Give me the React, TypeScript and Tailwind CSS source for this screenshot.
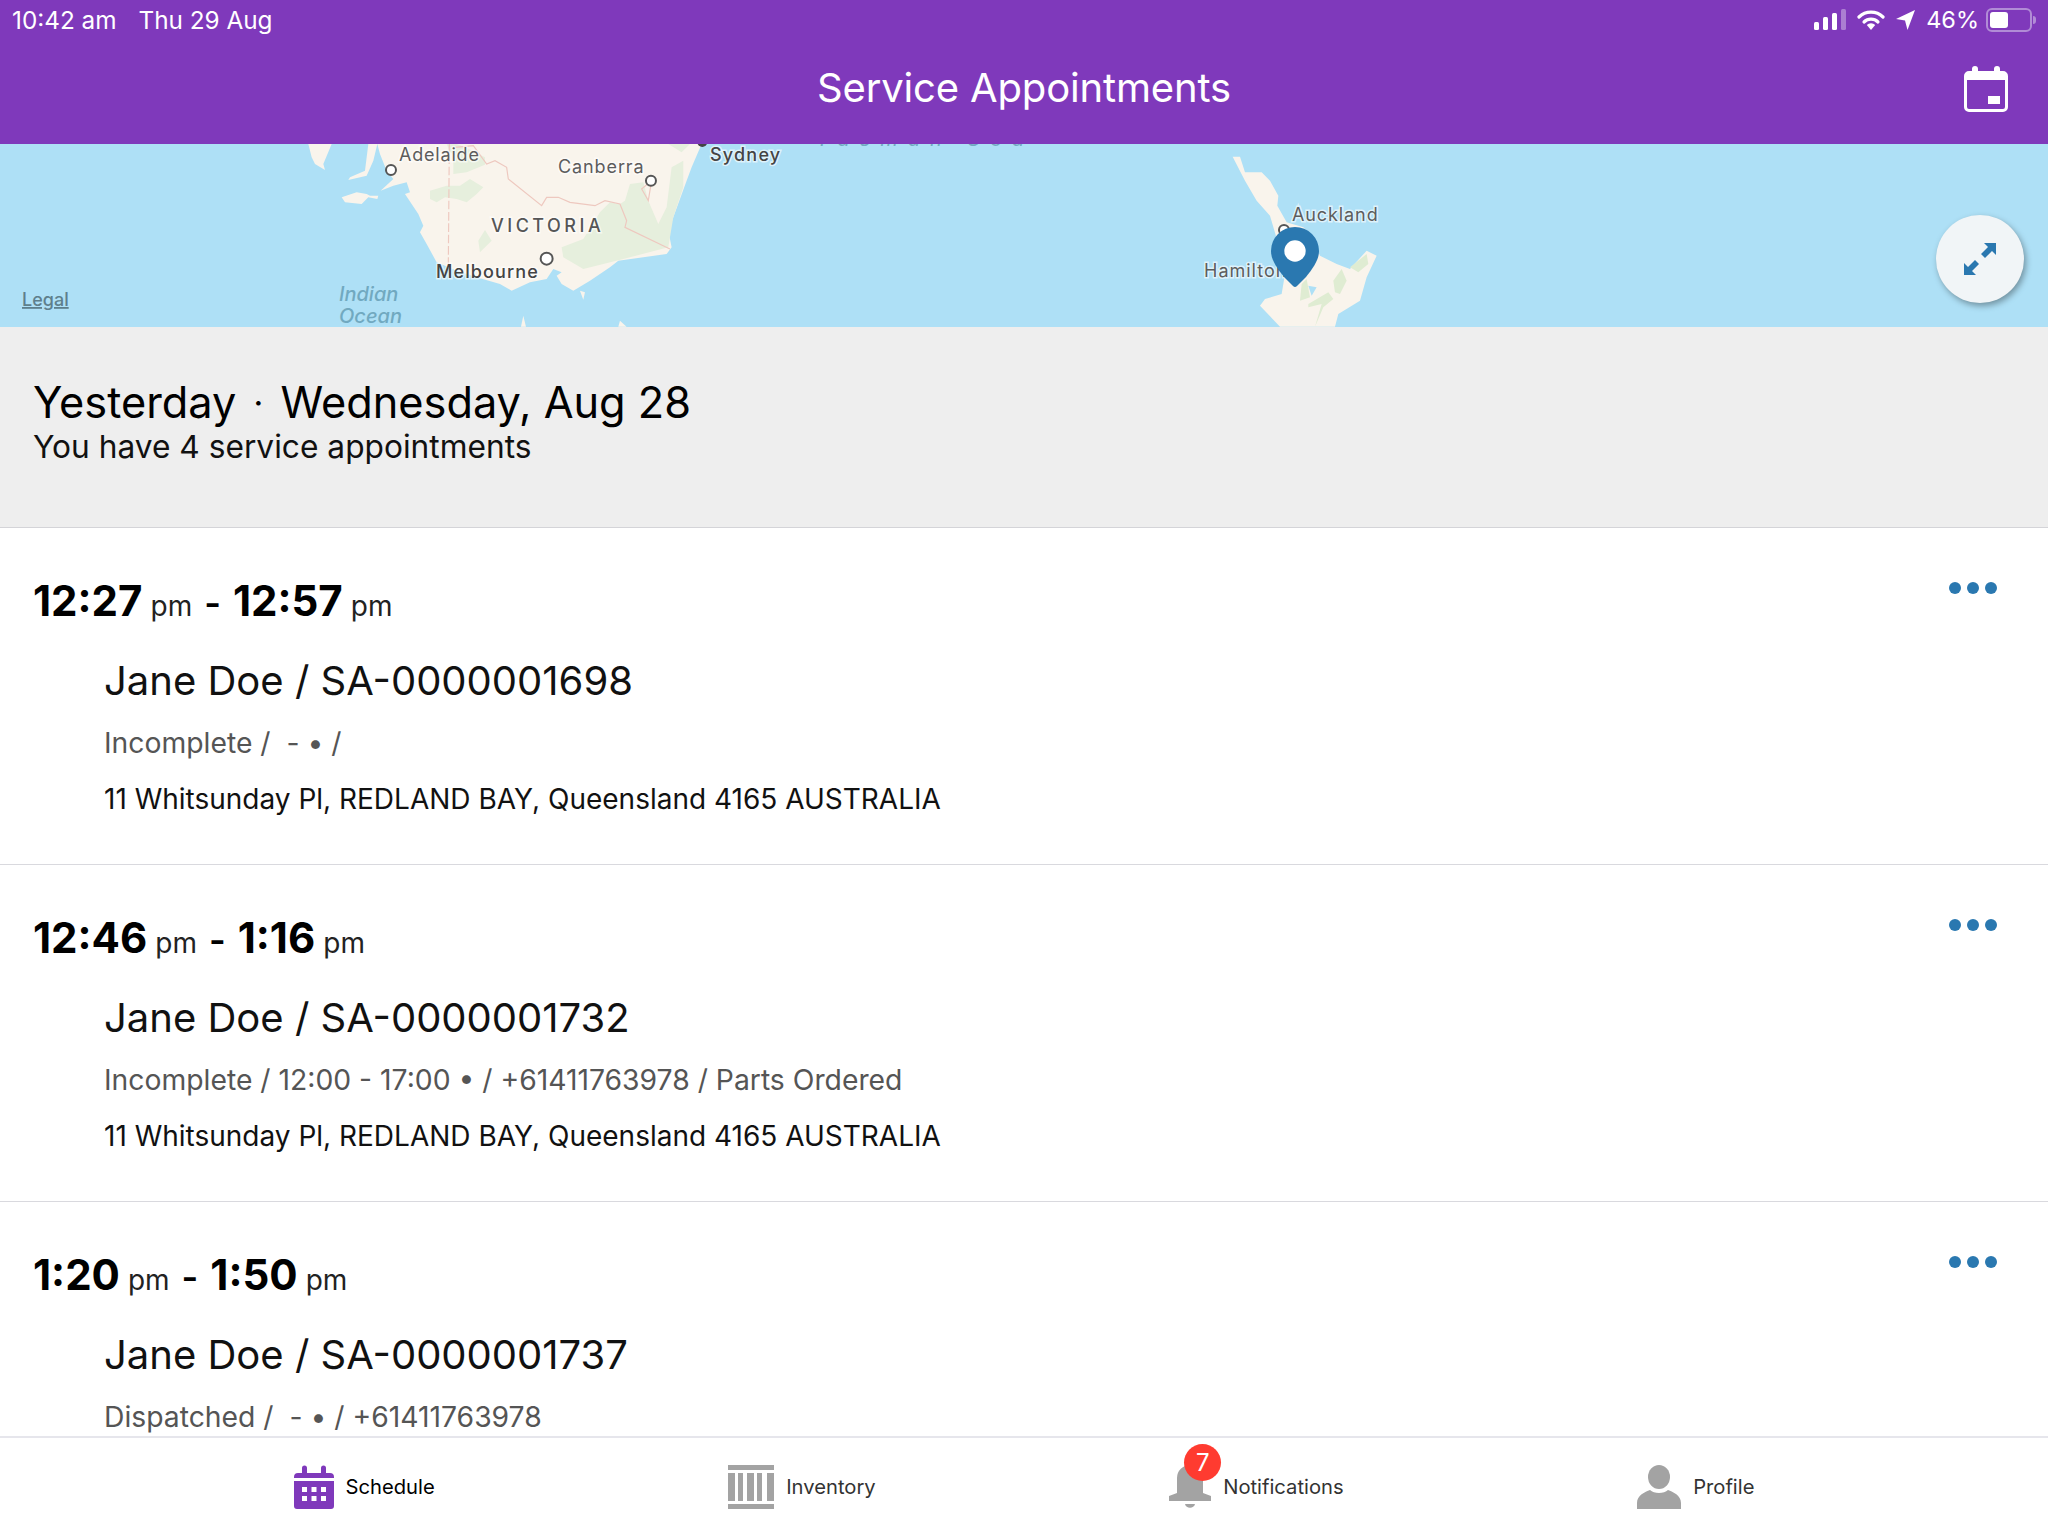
import React from "react";

const font = { fontFamily: "Inter, 'Liberation Sans', sans-serif" };

const appointments = [
  {
    start: "12:27",
    end: "12:57",
    title: "Jane Doe / SA-0000001698",
    status: "Incomplete /  - • /",
    address: "11 Whitsunday Pl, REDLAND BAY, Queensland 4165 AUSTRALIA",
  },
  {
    start: "12:46",
    end: "1:16",
    title: "Jane Doe / SA-0000001732",
    status: "Incomplete / 12:00 - 17:00 • / +61411763978 / Parts Ordered",
    address: "11 Whitsunday Pl, REDLAND BAY, Queensland 4165 AUSTRALIA",
  },
  {
    start: "1:20",
    end: "1:50",
    title: "Jane Doe / SA-0000001737",
    status: "Dispatched /  - • / +61411763978",
  },
];

function StatusIcons() {
  return (
    <div className="flex items-center">
      <svg width="32" height="22" viewBox="0 0 32 22" className="mr-[11px]">
        <rect x="0" y="13" width="5" height="8" rx="1.5" fill="#fff" />
        <rect x="9" y="8" width="5" height="13" rx="1.5" fill="#fff" />
        <rect x="18" y="4" width="5" height="17" rx="1.5" fill="#fff" />
        <rect x="27" y="0" width="5" height="21" rx="1.5" fill="#fff" opacity="0.35" />
      </svg>
      <svg width="28" height="22" viewBox="0 0 28 22" className="mr-[11px]">
        <path d="M2 8 A17 17 0 0 1 26 8" fill="none" stroke="#fff" strokeWidth="3.2" strokeLinecap="round" />
        <path d="M7 13 A10 10 0 0 1 21 13" fill="none" stroke="#fff" strokeWidth="3.2" strokeLinecap="round" />
        <path d="M9.8 16 L14 21 L18.2 16 A6 6 0 0 0 9.8 16 Z" fill="#fff" />
      </svg>
      <svg width="19" height="20" viewBox="0 0 19 20" className="mr-[11px]">
        <path d="M19 0 L11.5 20 L9 10.5 L0 9 Z" fill="#fff" />
      </svg>
      <span className="text-[23.5px] leading-none text-white mr-[7px]">46%</span>
      <div className="flex items-center">
        <div className="w-[46px] h-[24px] rounded-[6px] border-2 border-[#b18cd6] p-[2px]">
          <div className="w-[18px] h-full rounded-[3px] bg-white" />
        </div>
        <div className="w-[3px] h-[8px] rounded-r-sm bg-[#b18cd6] ml-[1px]" />
      </div>
    </div>
  );
}

function MapArea() {
  const label = { fontFamily: "Inter, sans-serif", paintOrder: "stroke" as const, stroke: "#ffffff", strokeWidth: 3, strokeOpacity: 0.6 };
  return (
    <div className="relative h-[183px] shrink-0 overflow-hidden bg-[#aee0f6]">
      <svg width="2048" height="183" viewBox="0 144 2048 183" className="block">
        {/* south east australia, traced at 3x */}
        <g transform="translate(290 144) scale(0.3333)">
          <path
            d="M262 0 L270 30 L290 80 L310 105 L272 140 L310 125 L350 115 L360 145 L345 150 L385 210 L400 245 L390 265 L410 300 L440 355 L500 380 L560 400 L630 420 L665 440 L720 415 L770 405 L790 375 L815 385 L800 395 L815 420 L850 440 L900 410 L960 370 L985 350 L1130 330 L1145 310 L1135 260 L1150 220 L1190 110 L1205 70 L1235 0 Z"
            fill="#f9f4ec"
          />
          <path d="M55 0 L65 40 L75 60 L105 78 L100 60 L125 0 Z" fill="#f9f4ec" />
          <path d="M235 0 L225 80 L180 100 L175 108 L230 95 L250 50 L262 0 Z" fill="#f9f4ec" />
          <path d="M155 160 L200 145 L230 150 L240 155 L265 155 L262 165 L235 160 L215 180 L165 175 Z" fill="#f9f4ec" />
          <path d="M870 440 L880 467 L885 445 Z M693 548 L700 515 L708 548 Z M985 548 L990 530 L1010 548 Z" fill="#f9f4ec" />
          {/* green */}
          <g fill="#e6efdd">
            <path d="M430 0 L470 0 L480 25 L490 30 L490 90 L530 85 L585 62 L585 40 L530 12 L500 0 Z" />
            <path d="M420 140 L470 125 L510 125 L540 105 L580 130 L560 150 L530 175 L500 165 L465 160 L440 175 L420 165 Z" />
            <path d="M585 258 L605 290 L570 325 L565 290 Z" />
            <path d="M815 310 L880 285 L930 205 L960 175 L990 180 L1005 170 L1020 120 L1060 115 L1075 170 L1105 240 L1130 190 L1145 70 L1180 50 L1180 130 L1150 220 L1135 310 L1000 345 L880 375 L820 340 Z" />
            <path d="M1135 0 L1175 25 L1200 0 Z" />
          </g>
          {/* state borders */}
          <path d="M478 0 L475 360" stroke="#eec8bf" strokeWidth="3.5" strokeDasharray="26 8" fill="none" />
          <path d="M495 10 L550 5 L590 60 L615 50 L650 70 L655 105 L755 185 L770 160 L805 160 L840 175 L915 185 L945 170 L990 180 L1010 230 L1005 250 L1140 315" stroke="#eec8bf" strokeWidth="3.5" fill="none" />
          <path d="M1085 110 L1055 135 L1075 170 Z" stroke="#eec8bf" strokeWidth="3.5" fill="none" />
          {/* cities */}
          <circle cx="303" cy="78" r="15" fill="#fff" stroke="#555" strokeWidth="6" />
          <circle cx="1083" cy="110" r="15" fill="#fff" stroke="#555" strokeWidth="6" />
          <circle cx="770" cy="344" r="18" fill="#fff" stroke="#555" strokeWidth="6" />
          <circle cx="1237" cy="-6" r="15" fill="#444" />
        </g>
        {/* new zealand, traced at 3x */}
        <g transform="translate(1190 144) scale(0.3333)">
          <path
            d="M128 38 L150 38 L165 85 L215 85 L240 110 L265 155 L262 185 L290 235 L340 250 L360 270 L390 335 L440 360 L480 375 L530 320 L560 335 L530 400 L510 470 L445 510 L435 548 L270 548 L210 485 L225 465 L275 450 L285 390 L265 300 L240 215 L200 170 L165 110 Z"
            fill="#f9f4ec"
          />
          <g fill="#dfecd2">
            <path d="M480 370 L530 330 L535 360 L505 385 Z" />
            <path d="M430 410 L455 375 L470 410 L450 450 L435 445 Z" />
            <path d="M335 420 L350 405 L360 460 L330 470 Z" />
            <path d="M355 480 L415 445 L430 465 L400 490 L375 548 L395 480 L355 490 Z" />
          </g>
          <path d="M355 425 L380 430 L365 455 Z" fill="#aee0f6" />
          <circle cx="282" cy="258" r="15" fill="#fff" stroke="#555" strokeWidth="6" />
        </g>
        {/* labels */}
        <text x="399" y="161" fontSize="18" letterSpacing="0.8" fill="#5c5c5c" style={label}>Adelaide</text>
        <text x="558" y="173" fontSize="18" letterSpacing="0.9" fill="#5c5c5c" style={label}>Canberra</text>
        <text x="710" y="161" fontSize="18" fontWeight="500" letterSpacing="1.2" fill="#444" style={label}>Sydney</text>
        <text x="491" y="232" fontSize="18" fontWeight="500" fill="#555" letterSpacing="3.5" style={label}>VICTORIA</text>
        <text x="436" y="278" fontSize="18" fontWeight="500" letterSpacing="1.1" fill="#444" style={label}>Melbourne</text>
        <text x="339" y="301" fontSize="20" fontWeight="500" fontStyle="italic" fill="#71a9c0">Indian</text>
        <text x="339" y="323" fontSize="20" fontWeight="500" fontStyle="italic" fill="#71a9c0">Ocean</text>
        <text x="22" y="306" fontSize="18" fontWeight="500" fill="#5e7f8c" textDecoration="underline">Legal</text>
        <text x="816" y="146" fontSize="20" fontStyle="italic" fill="#71a9c0" letterSpacing="10">Tasman Sea</text>
        <text x="1292" y="221" fontSize="18" letterSpacing="0.9" fill="#5c5c5c" style={label}>Auckland</text>
        <text x="1204" y="277" fontSize="18" letterSpacing="1" fill="#5c5c5c" style={label}>Hamilton</text>
        {/* pin */}
        <path d="M1271 251 A24 24 0 0 1 1319 251 C1319 260 1313 268 1306 277 L1297 286 Q1295 288 1293 286 L1284 277 C1277 268 1271 260 1271 251 Z" fill="#2a78b0" />
        <circle cx="1295" cy="251" r="10.7" fill="#fff" />
      </svg>
      <button className="absolute left-[1936px] top-[71px] w-[88px] h-[88px] rounded-full bg-[#f1f5f7] shadow-[2px_3px_6px_rgba(0,0,0,0.35)] flex items-center justify-center">
        <svg width="34" height="34" viewBox="0 0 34 34">
          <path d="M21 1 H33 V13 L29 9 L22 16 L18 12 L25 5 Z" fill="#2a78b0" />
          <path d="M13 33 H1 V21 L5 25 L12 18 L16 22 L9 29 Z" fill="#2a78b0" />
        </svg>
      </button>
    </div>
  );
}

function AppointmentRow({ item }: { item: (typeof appointments)[number] }) {
  return (
    <div className="h-[337px] shrink-0 border-b border-[#d9d9de] bg-white flex justify-between pl-[33px] pr-[51px]">
      <div>
        <div className="pt-[48px] h-[106px] flex items-baseline text-black">
          <span className="text-[42px] leading-[50px] font-bold">{item.start}</span>
          <span className="text-[28px] ml-[8px] text-[#222]">pm</span>
          <span className="text-[36px] font-semibold mx-[12px]">-</span>
          <span className="text-[42px] leading-[50px] font-bold">{item.end}</span>
          <span className="text-[28px] ml-[8px] text-[#222]">pm</span>
        </div>
        <div className="pl-[71px]">
          <div className="mt-[23px] text-[40px] leading-[48px] text-[#111]">{item.title}</div>
          <div className="mt-[20px] text-[28.3px] leading-[36px] text-[#555] whitespace-pre">{item.status}</div>
          {item.address && (
            <div className="mt-[20px] text-[28px] leading-[36px] text-[#111]">{item.address}</div>
          )}
        </div>
      </div>
      <div className="flex gap-[6px] pt-[54px]">
        <div className="w-[12px] h-[12px] rounded-full bg-[#2a78b0]" />
        <div className="w-[12px] h-[12px] rounded-full bg-[#2a78b0]" />
        <div className="w-[12px] h-[12px] rounded-full bg-[#2a78b0]" />
      </div>
    </div>
  );
}

function TabBar() {
  return (
    <div className="h-[100px] shrink-0 border-t-2 border-[#e6e6ec] bg-white flex justify-evenly items-start pt-[27px]">
      <div className="flex items-center gap-[12px]">
        <svg width="40" height="44" viewBox="0 0 40 44">
          <path d="M0 12 a4 4 0 0 1 4-4 H8 V3 a2.5 2.5 0 0 1 5 0 V8 H27 V3 a2.5 2.5 0 0 1 5 0 V8 H36 a4 4 0 0 1 4 4 V13 H0 Z M0 16 H40 V41 a3 3 0 0 1-3 3 H3 a3 3 0 0 1-3-3 Z" fill="#7f39bb" />
          <path d="M8 22h5v5H8zM17.5 22h5v5h-5zM27 22h5v5h-5zM8 31h5v5H8zM17.5 31h5v5h-5zM27 31h5v5h-5z" fill="#fff" />
        </svg>
        <span className="text-[20.2px] text-black">Schedule</span>
      </div>
      <div className="flex items-center gap-[12px]">
        <svg width="46" height="44" viewBox="0 0 46 44" fill="#a3a3a3">
          <rect x="0" y="0" width="46" height="5" />
          <rect x="0" y="39" width="46" height="5" />
          <rect x="0" y="8" width="7" height="28" />
          <rect x="10" y="8" width="5" height="28" />
          <rect x="19" y="8" width="7" height="28" />
          <rect x="29" y="8" width="5" height="28" />
          <rect x="39" y="8" width="7" height="28" />
        </svg>
        <span className="text-[20.2px] text-[#333]">Inventory</span>
      </div>
      <div className="relative flex items-center gap-[12px]">
        <svg width="42" height="44" viewBox="0 0 42 44" fill="#a3a3a3">
          <path d="M21 0 A13 13 0 0 1 34 13 V28 L42 31 V36 H0 V31 L8 28 V13 A13 13 0 0 1 21 0 Z" />
          <path d="M16 39 H26 C25 44 17 44 16 39 Z" />
        </svg>
        <span className="text-[20.2px] text-[#333]">Notifications</span>
        <div className="absolute left-[15px] top-[-21px] w-[37px] h-[37px] rounded-full bg-[#ff3b30] text-white text-[24px] leading-[37px] text-center">7</div>
      </div>
      <div className="flex items-center gap-[12px]">
        <svg width="44" height="44" viewBox="0 0 44 44" fill="#a3a3a3">
          <ellipse cx="22" cy="12" rx="11" ry="12" />
          <path d="M0 44 V38 C0 30 8 27 13 25 C17 29 27 29 31 25 C36 27 44 30 44 38 V44 Z" />
        </svg>
        <span className="text-[20.2px] text-[#333]">Profile</span>
      </div>
    </div>
  );
}

export default function App() {
  return (
    <div className="h-[1536px] w-[2048px] flex flex-col overflow-hidden bg-white" style={font}>
      <div className="h-[144px] shrink-0 bg-[#7f39bb] text-white">
        <div className="h-[40px] flex items-center justify-between pl-[12px] pr-[12px]">
          <div className="text-[24.3px] flex">
            <span>10:42 am</span>
            <span className="ml-[22px]">Thu 29 Aug</span>
          </div>
          <StatusIcons />
        </div>
        <div className="relative h-[96px] flex items-center justify-center">
          <div className="text-[40px] tracking-[-0.15px]">Service Appointments</div>
          <svg width="44" height="47" viewBox="0 0 44 47" className="absolute right-[40px] top-[25px]">
            <path d="M11 1 a3 3 0 0 1 3 3 V6 H30 V4 a3 3 0 0 1 6 0 V6 H39 a5 5 0 0 1 5 5 V42 a5 5 0 0 1-5 5 H5 a5 5 0 0 1-5-5 V11 a5 5 0 0 1 5-5 H8 V4 a3 3 0 0 1 3-3 Z M3 15 V42 a2 2 0 0 0 2 2 H39 a2 2 0 0 0 2-2 V15 Z" fill="#fff" fillRule="evenodd" />
            <rect x="24" y="31" width="12" height="8" fill="#fff" />
          </svg>
        </div>
      </div>

      <MapArea />

      <div className="h-[201px] shrink-0 bg-[#eeeeee] border-b border-[#d4d4d8] pl-[33px] pt-[49px]">
        <div className="text-[43.3px] leading-[52px] text-black flex">
          <span>Yesterday</span>
          <span className="mx-[16px] font-light">·</span>
          <span>Wednesday, Aug 28</span>
        </div>
        <div className="text-[31.7px] leading-[38px] text-[#111]">You have 4 service appointments</div>
      </div>

      <div className="flex-1 overflow-hidden">
        {appointments.map((item) => (
          <AppointmentRow key={item.title} item={item} />
        ))}
      </div>

      <TabBar />
    </div>
  );
}
